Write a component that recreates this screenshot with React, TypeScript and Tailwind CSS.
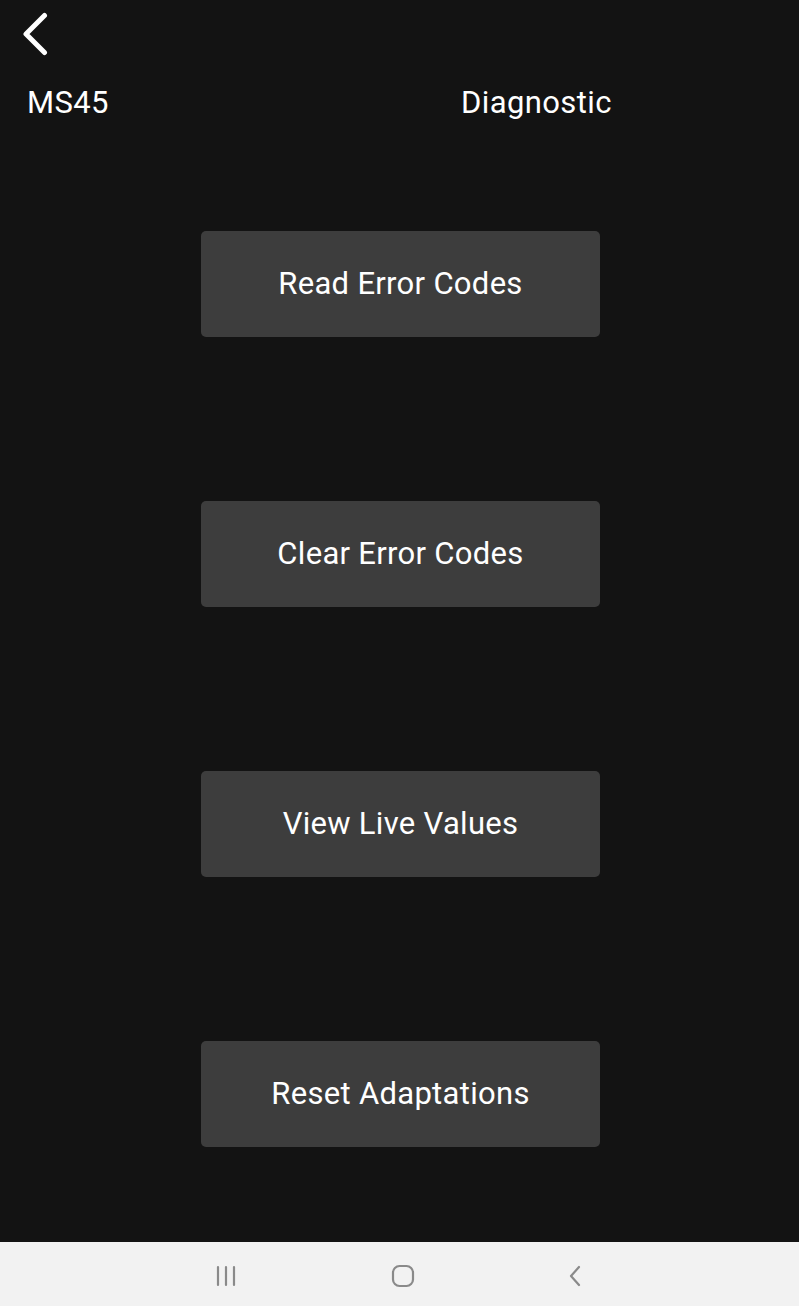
import React from "react";

const labels = ["Read Error Codes", "Clear Error Codes", "View Live Values", "Reset Adaptations"];

export default function App() {
  return (
    <div
      className="w-[799px] h-[1306px] flex flex-col bg-[#131313] text-white"
      style={{ fontFamily: "Roboto, 'Noto Sans', sans-serif" }}
    >
      <div className="flex-1 flex flex-col">
        <div className="h-[66px] pl-[20px] pt-[12px]">
          <svg width="30" height="44" viewBox="0 0 30 44" className="block">
            <path d="M24.5 3.5 L6 22 L24.5 40.5" fill="none" stroke="#fff" strokeWidth="5" strokeLinecap="round" strokeLinejoin="round" />
          </svg>
        </div>
        <div className="flex h-[70px] items-start text-[31px] leading-[70px] mt-[2px] tracking-[0.4px]">
          <span className="ml-[27px] w-[434px]">MS45</span>
          <span>Diagnostic</span>
        </div>
        <div className="flex flex-col items-center gap-[164px] mt-[93px] pl-[2px]">
          {labels.map((l) => (
            <button
              key={l}
              className="w-[399px] h-[106px] rounded-[5px] bg-[#3d3d3d] text-[31px] text-white tracking-[0.3px] flex items-center justify-center"
            >
              {l}
            </button>
          ))}
        </div>
      </div>
      <div className="h-[64px] bg-[#f2f2f2] flex items-center justify-center">
        <div className="flex items-center justify-between w-[368px] ml-[0px] mt-[4px]">
          <svg width="22" height="22" viewBox="0 0 22 22">
            <path d="M2 2 V20 M10 2 V20 M18 2 V20" stroke="#8a8a8a" strokeWidth="2.2" strokeLinecap="round" />
          </svg>
          <svg width="24" height="24" viewBox="0 0 24 24">
            <rect x="2" y="2" width="20" height="20" rx="6.5" fill="none" stroke="#8a8a8a" strokeWidth="2.2" />
          </svg>
          <svg width="16" height="22" viewBox="0 0 16 22">
            <path d="M11 2 L3 11 L11 20" fill="none" stroke="#8a8a8a" strokeWidth="2.2" strokeLinecap="round" strokeLinejoin="round" />
          </svg>
        </div>
      </div>
    </div>
  );
}
